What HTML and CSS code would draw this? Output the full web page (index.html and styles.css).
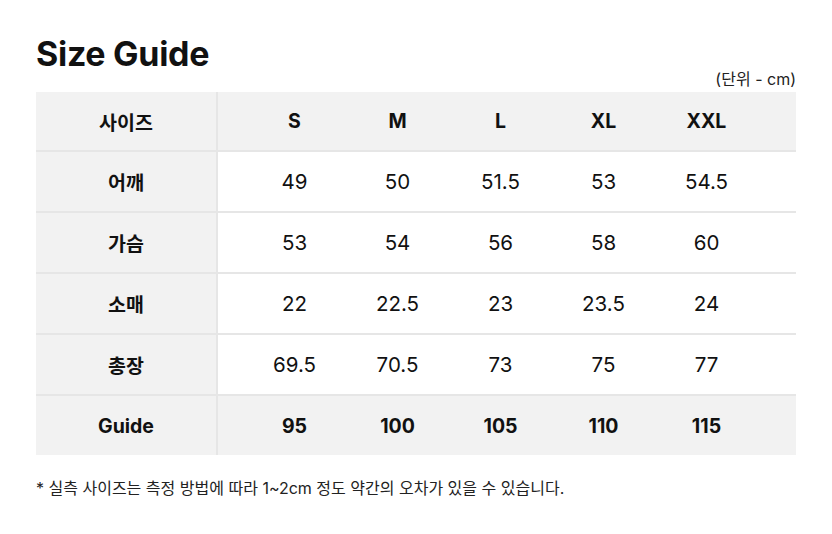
FILE: index.html
```html
<!DOCTYPE html>
<html lang="ko">
<head>
<meta charset="utf-8">
<title>Size Guide</title>
<link rel="stylesheet" href="styles.css">
</head>
<body>
<div class="page">
  <h1 class="title">Size Guide</h1>
  <div class="unit">(단위 - cm)</div>
  <div class="table">
    <div class="row head">
      <div class="label">사이즈</div>
      <div class="cells"><span>S</span><span>M</span><span>L</span><span>XL</span><span>XXL</span></div>
    </div>
    <div class="row">
      <div class="label">어깨</div>
      <div class="cells"><span>49</span><span>50</span><span>51.5</span><span>53</span><span>54.5</span></div>
    </div>
    <div class="row">
      <div class="label">가슴</div>
      <div class="cells"><span>53</span><span>54</span><span>56</span><span>58</span><span>60</span></div>
    </div>
    <div class="row">
      <div class="label">소매</div>
      <div class="cells"><span>22</span><span>22.5</span><span>23</span><span>23.5</span><span>24</span></div>
    </div>
    <div class="row">
      <div class="label">총장</div>
      <div class="cells"><span>69.5</span><span>70.5</span><span>73</span><span>75</span><span>77</span></div>
    </div>
    <div class="row head last">
      <div class="label">Guide</div>
      <div class="cells"><span>95</span><span>100</span><span>105</span><span>110</span><span>115</span></div>
    </div>
  </div>
  <p class="note">* 실측 사이즈는 측정 방법에 따라 1~2cm 정도 약간의 오차가 있을 수 있습니다.</p>
</div>
</body>
</html>
```
FILE: styles.css
```css
* { box-sizing: border-box; }
html, body { margin: 0; padding: 0; background: #fff; }
body {
  font-family: Inter, "Noto Sans CJK KR", sans-serif;
  color: #111;
}
.page {
  width: 832px;
  padding: 33px 36px 0 36px;
}
.title {
  margin: 0;
  font-size: 34px;
  line-height: 42px;
  font-weight: 700;
  letter-spacing: -0.3px;
  height: 36px;
}
.unit {
  text-align: right;
  font-size: 16px;
  line-height: 20px;
  height: 23px;
  color: #222;
}
.table {
  width: 760px;
}
.row {
  display: flex;
  height: 61px;
  border-bottom: 2px solid #e6e6e6;
}
.row.head { background: #f2f2f2; height: 60px; }
.row.last { border-bottom: none; height: 59px; }
.label {
  width: 182px;
  flex: none;
  display: flex;
  align-items: center;
  justify-content: center;
  background: #f2f2f2;
  border-right: 2px solid #e6e6e6;
  font-size: 19.5px;
  font-weight: 700;
}
.cells {
  flex: 1;
  display: flex;
  align-items: center;
  padding-left: 25px;
}
.cells span {
  width: 103px;
  text-align: center;
  font-size: 20.5px;
}
.head .cells span { font-weight: 700; font-size: 19.5px; }
.note {
  margin: 23px 0 0 0;
  font-size: 16px;
  line-height: 20px;
  color: #222;
}
```
